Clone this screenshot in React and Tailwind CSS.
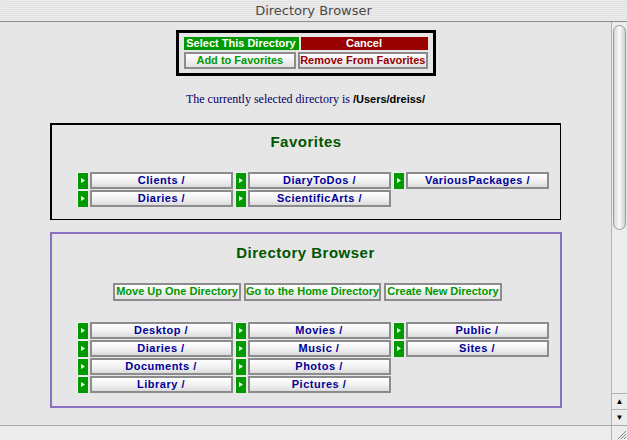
import React from 'react'

const font = { fontFamily: '"Liberation Sans", Arial, sans-serif' }

const favs = [['Clients /', 'DiaryToDos /', 'VariousPackages /'], ['Diaries /', 'ScientificArts /', null]]
const dirs = [
  ['Desktop /', 'Movies /', 'Public /'],
  ['Diaries /', 'Music /', 'Sites /'],
  ['Documents /', 'Photos /', null],
  ['Library /', 'Pictures /', null],
]

function Arrow(){
  return (
    <div className="w-[11px] h-[17px] bg-[#009900] border-l border-t border-[#f4f4f4] flex items-center justify-center">
      <svg width="4" height="5" viewBox="0 0 4 5"><path d="M0 0 L4 2.5 L0 5 Z" fill="#e8ffe8"/></svg>
    </div>
  )
}

function DirButton({label}){
  return (
    <div className="w-[143px] h-[17px] border-2 border-[#8c8c8c] bg-gradient-to-b from-[#ffffff] via-[#f2f2f2] to-[#dcdcdc] flex items-center justify-center text-[11px] font-bold text-[#000099] tracking-[0.5px] leading-none whitespace-nowrap">
      {label}
    </div>
  )
}

function Cell({label}){
  if(!label) return <div className="w-[156px]" />
  return (
    <div className="flex items-center gap-[2px]">
      <Arrow />
      <DirButton label={label} />
    </div>
  )
}

function Grid({rows}){
  return (
    <div className="flex flex-col gap-[1px] pl-[25px]">
      {rows.map((r, i) => (
        <div key={i} className="flex gap-[2px]">
          {r.map((l, j) => <Cell key={j} label={l} />)}
        </div>
      ))}
    </div>
  )
}

function NavButton({label, w}){
  return (
    <div className={`${w} h-[18px] border-2 border-[#8c8c8c] bg-gradient-to-b from-[#ffffff] to-[#e2e2e2] flex items-center justify-center text-[11px] font-bold text-[#009900] leading-none whitespace-nowrap`}>
      {label}
    </div>
  )
}

export default function App(){
  return (
    <div style={font} className="w-[627px] h-[440px] bg-[#e6e6e6] flex flex-col overflow-hidden">
      {/* title bar */}
      <div className="h-[22px] rounded-t-[6px] bg-[repeating-linear-gradient(to_bottom,#ececec_0px,#ececec_1px,#e2e2e2_1px,#e2e2e2_2px)] border-b border-[#8a8a8a] flex items-center justify-center text-[13px] text-[#4a4a4a]" style={{fontFamily: '"Lucida Grande", "DejaVu Sans", sans-serif'}}>
        Directory Browser
      </div>
      <div className="flex flex-1 min-h-0">
        <div className="flex-1 flex flex-col items-center">
          {/* action box */}
          <div className="mt-[8px] w-[260px] border-[3px] border-black px-[5px] py-[4px] flex flex-col gap-[2px]">
            <div className="flex gap-[2px]">
              <div className="w-[115px] h-[13px] bg-[#009900] text-white text-[11px] font-bold flex items-center justify-center leading-none whitespace-nowrap">Select This Directory</div>
              <div className="flex-1 h-[13px] bg-[#990000] text-white text-[11px] font-bold flex items-center justify-center leading-none">Cancel</div>
            </div>
            <div className="flex gap-[2px]">
              <div className="w-[115px] h-[17px] border-2 border-[#8c8c8c] bg-gradient-to-b from-white to-[#e2e2e2] text-[#009900] text-[11px] font-bold flex items-center justify-center leading-none whitespace-nowrap">Add to Favorites</div>
              <div className="flex-1 h-[17px] border-2 border-[#8c8c8c] bg-gradient-to-b from-white to-[#e2e2e2] text-[#990000] text-[11px] font-bold flex items-center justify-center leading-none whitespace-nowrap">Remove From Favorites</div>
            </div>
          </div>
          <div className="mt-[17px] text-[12px] text-[#000066] leading-none" style={{fontFamily: '"Liberation Serif", "Times New Roman", serif'}}>
            The currently selected directory is <span style={font} className="font-bold text-black text-[11px]">/Users/dreiss/</span>
          </div>
          {/* favorites */}
          <div className="mt-[18px] w-[511px] h-[97px] border-2 border-black border-r border-b flex flex-col">
            <div className="mt-[6px] text-center text-[15px] font-bold text-[#005500] tracking-[0.5px]">Favorites</div>
            <div className="mt-[18px]"><Grid rows={favs} /></div>
          </div>
          {/* directory browser */}
          <div className="mt-[12px] w-[512px] h-[176px] border-2 border-[#8a72c2] flex flex-col">
            <div className="mt-[8px] text-center text-[15px] font-bold text-[#005500] tracking-[0.5px]">Directory Browser</div>
            <div className="mt-[18px] flex justify-center gap-[3px] pl-[4px]">
              <NavButton label="Move Up One Directory" w="w-[128px]" />
              <NavButton label="Go to the Home Directory" w="w-[137px]" />
              <NavButton label="Create New Directory" w="w-[118px]" />
            </div>
            <div className="mt-[21px]"><Grid rows={dirs} /></div>
          </div>
        </div>
        {/* vertical scrollbar */}
        <div className="w-[16px] bg-[#ececec] border-l border-[#b4b4b4] flex flex-col">
          <div className="mt-[3px] mx-[1px] h-[205px] rounded-t-[7px] rounded-b-[7px] border border-[#9a9a9a] bg-gradient-to-r from-[#d8d8d8] via-[#fafafa] to-[#d0d0d0]" />
          <div className="flex-1" />
          <div className="h-[16px] border-t border-[#b4b4b4] flex items-center justify-center text-[8px] text-black">▲</div>
          <div className="h-[16px] border-t border-[#b4b4b4] flex items-center justify-center text-[8px] text-black">▼</div>
        </div>
      </div>
      {/* horizontal bar */}
      <div className="h-[15px] border-t border-[#a8a8a8] bg-[#ececec] flex">
        <div className="flex-1" />
        <div className="w-[16px] border-l border-[#b4b4b4] flex items-end justify-end">
          <svg width="12" height="12" viewBox="0 0 12 12"><path d="M11 3 L3 11 M11 6 L6 11 M11 9 L9 11" stroke="#888" strokeWidth="1"/></svg>
        </div>
      </div>
    </div>
  )
}
